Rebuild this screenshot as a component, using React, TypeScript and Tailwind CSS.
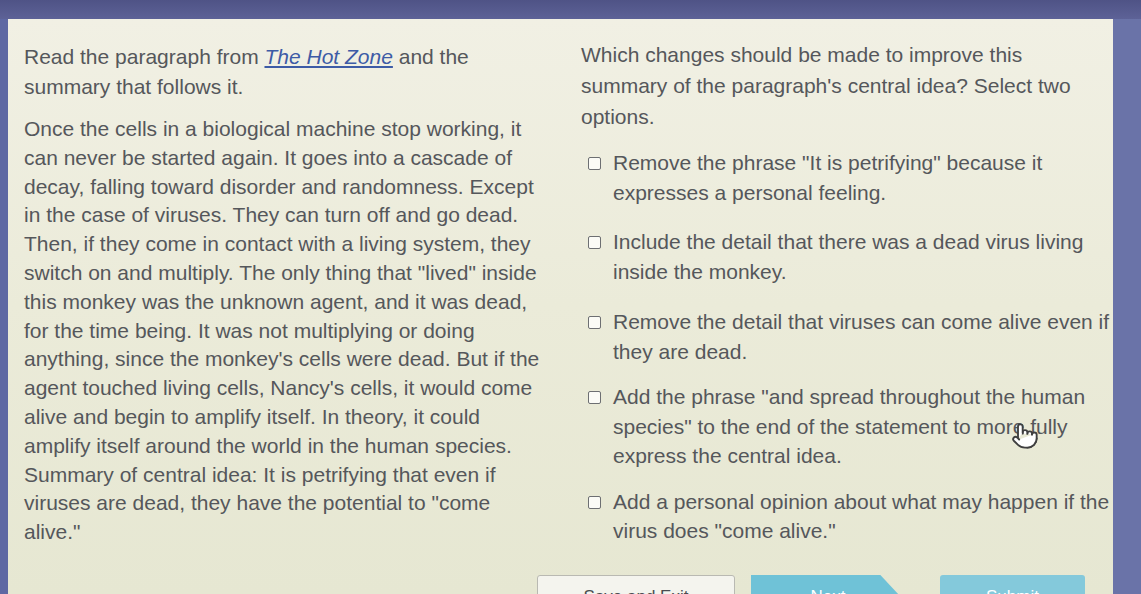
import { Pointer } from 'lucide-react'

const passage = [
  'Once the cells in a biological machine stop working, it',
  'can never be started again. It goes into a cascade of',
  'decay, falling toward disorder and randomness. Except',
  'in the case of viruses. They can turn off and go dead.',
  'Then, if they come in contact with a living system, they',
  'switch on and multiply. The only thing that "lived" inside',
  'this monkey was the unknown agent, and it was dead,',
  'for the time being. It was not multiplying or doing',
  'anything, since the monkey\'s cells were dead. But if the',
  'agent touched living cells, Nancy\'s cells, it would come',
  'alive and begin to amplify itself. In theory, it could',
  'amplify itself around the world in the human species.',
  'Summary of central idea: It is petrifying that even if',
  'viruses are dead, they have the potential to "come',
  'alive."',
]

const options = [
  { gap: 'mt-[16px]', lines: ['Remove the phrase "It is petrifying" because it', 'expresses a personal feeling.'] },
  { gap: 'mt-[20px]', lines: ['Include the detail that there was a dead virus living', 'inside the monkey.'] },
  { gap: 'mt-[21px]', lines: ['Remove the detail that viruses can come alive even if', 'they are dead.'] },
  { gap: 'mt-[16px]', lines: ['Add the phrase "and spread throughout the human', 'species" to the end of the statement to more fully', 'express the central idea.'] },
  { gap: 'mt-[16px]', lines: ['Add a personal opinion about what may happen if the', 'virus does "come alive."'] },
]

export default function App() {
  return (
    <div className="h-[594px] w-full overflow-hidden bg-[#585d92] flex flex-col font-['Liberation_Sans',Arial,sans-serif]">
      {/* top band */}
      <div className="h-[19px] shrink-0 bg-gradient-to-b from-[#4f5386] to-[#5d6297]" />

      <div className="flex flex-1 min-h-0">
        <div className="w-[8px] shrink-0 bg-[#5e68a3]" />

        {/* card */}
        <div className="relative flex-1 flex flex-col bg-gradient-to-b from-[#f1f0e4] via-[#ebebd9] to-[#e6e7d2] text-[21px] text-[#55575b]">
          <div className="grid grid-cols-[573px_1fr] items-start">
            {/* passage */}
            <div className="pl-[16px] pt-[23px]">
              <p className="leading-[30px] whitespace-nowrap">
                <span className="block">
                  Read the paragraph from{' '}
                  <span className="italic underline text-[#3d5ba6]">The Hot Zone</span> and the
                </span>
                <span className="block">summary that follows it.</span>
              </p>
              <p className="mt-[13px] leading-[28.8px] whitespace-nowrap">
                {passage.map((line, i) => (
                  <span key={i} className="block">{line}</span>
                ))}
              </p>
            </div>

            {/* question */}
            <div className="pt-[20px]">
              <p className="leading-[31px] whitespace-nowrap">
                <span className="block">Which changes should be made to improve this</span>
                <span className="block">summary of the paragraph's central idea? Select two</span>
                <span className="block">options.</span>
              </p>
              <div className="pl-[7px]">
                {options.map((opt, i) => (
                  <label key={i} className={`${opt.gap} flex items-start gap-[12px]`}>
                    <span className="mt-[9px] h-[13px] w-[13px] shrink-0 rounded-[2px] border-[1.5px] border-[#6d6f72] bg-[#fbfbf6]" />
                    <span className="leading-[29.5px] whitespace-nowrap">
                      {opt.lines.map((l, j) => (
                        <span key={j} className="block">{l}</span>
                      ))}
                    </span>
                  </label>
                ))}
              </div>
            </div>
          </div>

          {/* divider */}
          <div className="mt-[24px] mx-[4px] h-[2px] bg-[#c8c9bb] shadow-[0_1px_1px_rgba(255,255,255,0.8)]" />

          {/* buttons */}
          <div className="mt-[4px] flex justify-end pr-[28px] text-[17px]">
            <button className="h-[44px] w-[198px] rounded-[3px] border border-[#b9b9b2] bg-[#f4f4ee] text-[#4a4c50]">
              Save and Exit
            </button>
            <button className="ml-[16px] h-[44px] w-[154px] bg-[#6fc2d7] text-white [clip-path:polygon(0_0,84%_0,100%_60%,100%_100%,0_100%)]">
              Next
            </button>
            <button className="ml-[35px] h-[44px] w-[145px] rounded-[3px] bg-[#84c9db] text-white">
              Submit
            </button>
          </div>

          {/* mouse cursor */}
          <Pointer
            className="absolute left-[1003px] top-[403px] h-[28px] w-[28px] text-[#3f3f3f]"
            fill="#ffffff"
            strokeWidth={1.6}
          />
        </div>

        <div className="w-[28px] shrink-0 bg-[#6a73a8]" />
      </div>
    </div>
  )
}
